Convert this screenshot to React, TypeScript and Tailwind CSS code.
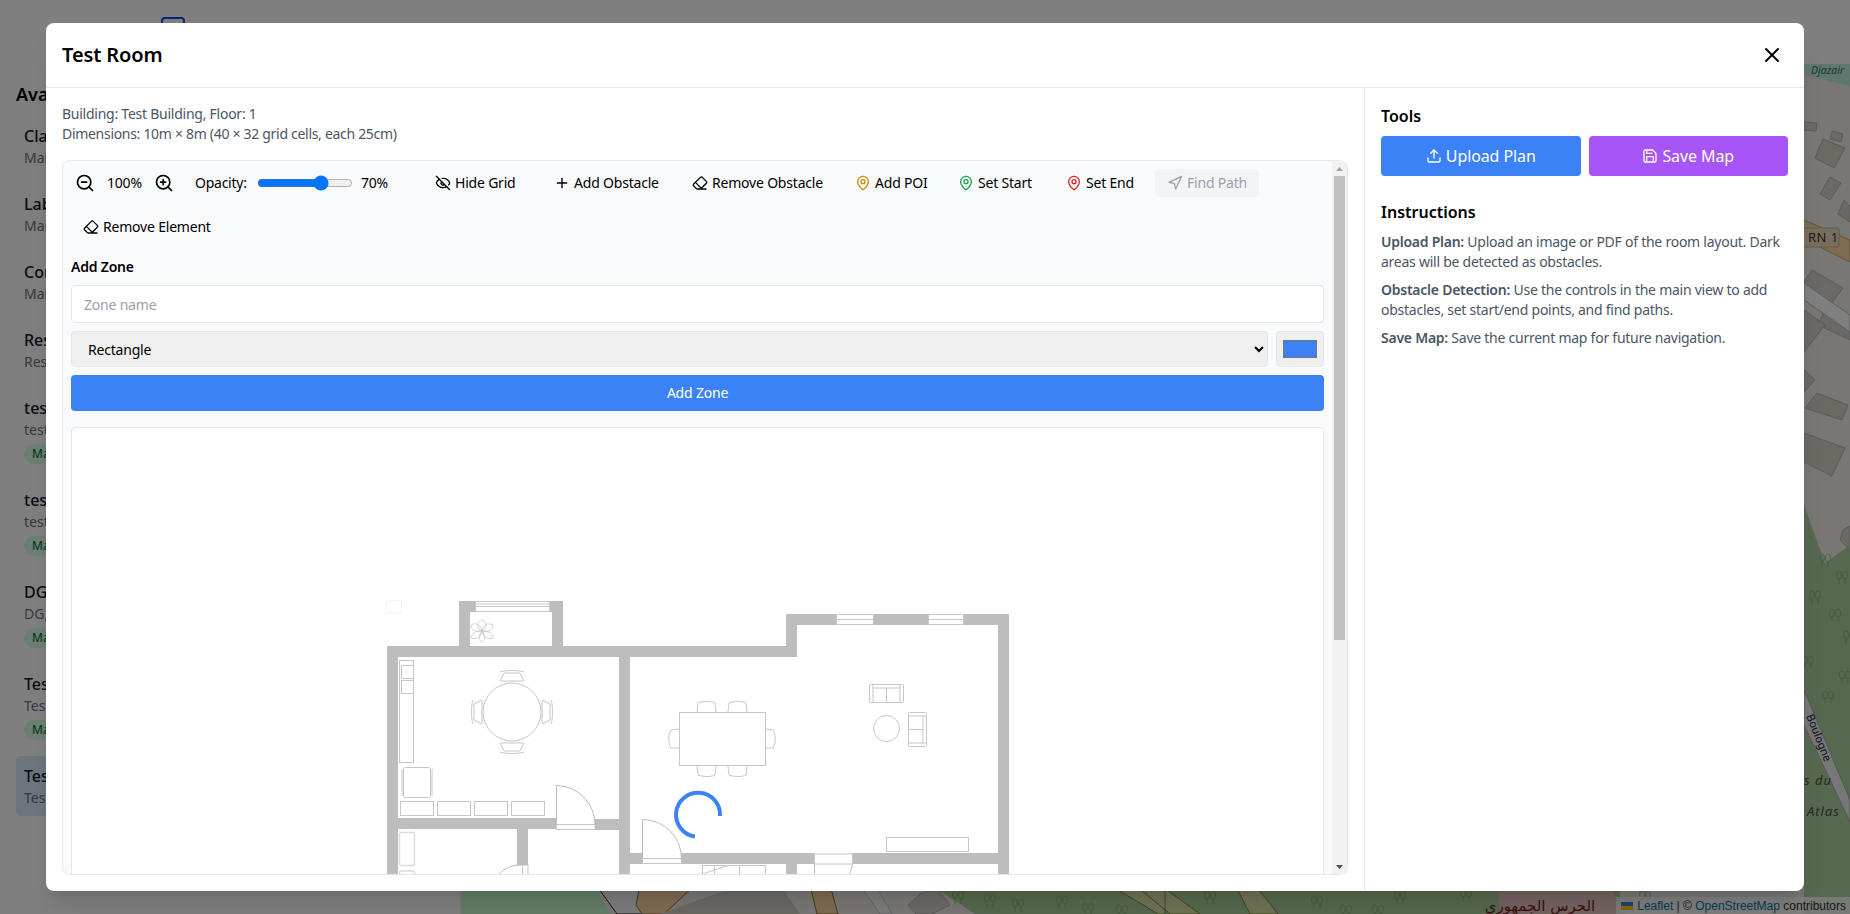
import { Eraser, EyeOff, MapPin, Navigation, Plus, Save, Upload, X, ZoomIn, ZoomOut } from "lucide-react"

const rooms = [
  { name: "Classroom A", sub: "Main Building, Floor 1" },
  { name: "Lab 1", sub: "Main Building, Floor 2" },
  { name: "Conference", sub: "Main Building, Floor 3" },
  { name: "Reserve", sub: "Reserve Building, Floor 1" },
  { name: "test", sub: "test, Floor 1", mapped: true },
  { name: "test 2", sub: "test, Floor 2", mapped: true },
  { name: "DG", sub: "DG, Floor 1", mapped: true },
  { name: "Test", sub: "Test Building, Floor 2", mapped: true },
  { name: "Test Room", sub: "Test Building, Floor 1", selected: true },
]

const trees = [
  [1825, 563], [1815, 600], [1842, 580], [1835, 618], [1849, 640], [1808, 665], [1845, 680], [1828, 700],
  [958, 900], [990, 903], [1018, 908], [1062, 905], [1088, 912], [1122, 914],
  [1210, 900], [1317, 905], [1346, 914], [1400, 900], [1378, 914], [1466, 898], [1645, 900],
]

function Tree({ x, y }: { x: number; y: number }) {
  return (
    <g fill="none" stroke="#8ab082" strokeWidth="0.8">
      <ellipse cx={x - 3} cy={y - 5} rx="2.5" ry="4" />
      <ellipse cx={x + 3} cy={y - 5} rx="2.5" ry="4" />
      <path d={`M${x - 3} ${y - 2}v6M${x + 3} ${y - 2}v6`} />
    </g>
  )
}

function OsmMap() {
  return (
    <svg viewBox="460 64 1390 850" className="block h-full w-full">
      <rect x="460" y="64" width="1390" height="850" fill="#f2efe9" />
      {/* top band */}
      <path d="M1790 64H1850V86L1790 72Z" fill="#bcf0de" />
      <text x="1811" y="74" fontSize="10.5" fontStyle="italic" fill="#4b6e66" fontFamily="'Noto Sans', sans-serif">Djazair</text>
      {/* buildings */}
      <g fill="#d9d0c9" stroke="#bfb3aa" strokeWidth="1">
        <path d="M1804 122L1817 123L1816 131L1804 130Z" />
        <path d="M1832 131L1843 134L1841 142L1830 139Z" />
        <path d="M1823 139L1845 148L1834 168L1815 158Z" />
        <path d="M1830 177L1841 183L1830 200L1820 194Z" />
        <path d="M1844 200L1850 206V222L1838 214Z" />
        <path d="M1812 270L1843 288L1825 312L1804 296V282Z" />
        <path d="M1827 305L1850 318V340L1818 325Z" />
        <path d="M1804 310L1825 325L1804 352Z" />
        <path d="M1817 393L1848 405L1842 420L1805 408Z" />
        <path d="M1804 433L1845 448L1832 476L1804 462Z" />
        <path d="M1804 370L1815 380L1804 392Z" />
        <path d="M1843 530L1850 526V550L1840 540Z" />
        <path d="M908 905L926 889H938L950 905L932 914H916Z" />
      </g>
      {/* RN 1 road */}
      <path d="M1790 214L1850 240V262L1790 232Z" fill="#fcd6a4" stroke="#c9a267" strokeWidth="1" />
      <rect x="1800" y="228" width="39" height="19" rx="2" fill="#f0dcc0" stroke="#c9b495" strokeWidth="1" />
      <text x="1808" y="242" fontSize="13" letterSpacing="0.5" fill="#333" fontFamily="'Noto Sans', sans-serif">RN 1</text>
      <path d="M1804 283L1850 315V332L1804 300Z" fill="#fff" stroke="#bbb" strokeWidth="1" />
      {/* forest on the right */}
      <path d="M1804 505L1825 563L1850 545V914H1804Z" fill="#add19e" />
      <path d="M1804 690L1850 800V822L1804 725Z" fill="#eeeeee" stroke="#aaa" strokeWidth="1" />
      <text x="1806" y="716" fontSize="11" fill="#222" transform="rotate(68 1806 716)" fontFamily="'Noto Sans', sans-serif">Boulogne</text>
      <text x="1804" y="785" fontSize="13" fontStyle="italic" letterSpacing="1" fill="#46563f" fontFamily="'Noto Sans', sans-serif">s du</text>
      <text x="1807" y="816" fontSize="13" fontStyle="italic" letterSpacing="1" fill="#46563f" fontFamily="'Noto Sans', sans-serif">Atlas</text>
      {/* bottom strip */}
      <path d="M462 885H596L610 914H462Z" fill="#c8facc" />
      <path d="M596 885L640 885L660 914H617Z" fill="#f8f8f8" stroke="#222" strokeWidth="1" />
      <path d="M640 885L695 885L664 914H642L636 905Z" fill="#fcd6a4" stroke="#8f6f2e" strokeWidth="1" />
      <path d="M660 914L740 885H780L800 914Z" fill="#d9d0c9" />
      <path d="M810 885H830L838 914H817Z" fill="#fcd6a4" stroke="#8f6f2e" strokeWidth="1" />
      <path d="M860 885H875L892 914H880Z" fill="#f8f8f8" stroke="#ccc" strokeWidth="1" />
      <path d="M931 885L975 914H1620V885Z" fill="#add19e" />
      <path d="M1110 885H1165V914H1158ZM1160 885L1200 914H1170L1135 885Z" fill="#dfe5a8" stroke="#7e8a3a" strokeWidth="1" />
      <path d="M1235 885H1255L1278 914H1250Z" fill="#dfe5a8" stroke="#7e8a3a" strokeWidth="1" />
      <path d="M1498 891L1612 891L1625 914H1500Z" fill="#e6c6c2" />
      {trees.map(([x, y]) => (
        <Tree key={`${x}-${y}`} x={x} y={y} />
      ))}
      <text x="1540" y="911" textAnchor="middle" fontSize="15" fill="#7a1c1c" fontFamily="'DejaVu Sans', sans-serif">الحرس الجمهوري</text>
    </svg>
  )
}

function Background() {
  return (
    <div className="flex h-[914px] w-[1850px] flex-col overflow-hidden bg-white">
      <div className="flex h-16 shrink-0 items-start pl-[161px] pt-[17px]">
        <div className="h-6 w-6 rounded border-2 border-blue-700" />
      </div>
      <div className="relative flex min-h-0 flex-1">
        <div className="w-[460px] shrink-0 p-4">
          <h2 className="mb-2 text-lg font-semibold leading-7 text-black">Available Rooms</h2>
          {rooms.map((room) => (
            <div key={room.name} className={`mb-2 rounded p-2 ${room.selected ? "bg-blue-100" : ""}`}>
              <div className="font-medium leading-6 text-gray-900">{room.name}</div>
              <div className="text-sm leading-5 text-gray-500">{room.sub}</div>
              {room.mapped && (
                <span className="mt-1 block h-5 w-20 rounded-full bg-green-100 px-2 text-xs leading-5 text-green-800">Mapped</span>
              )}
            </div>
          ))}
        </div>
        <div className="min-w-0 flex-1">
          <OsmMap />
        </div>
        <div className="absolute bottom-0 right-0 flex h-[17px] items-center gap-1 bg-white/80 pl-[5px] pr-1 font-['Liberation_Sans',sans-serif] text-xs leading-none text-[#333]">
          <svg width="12" height="8" viewBox="0 0 12 8">
            <rect width="12" height="4" fill="#4c7be1" />
            <rect y="4" width="12" height="4" fill="#ffd500" />
          </svg>
          <span><span className="text-[#0078a8]">Leaflet</span> | © <span className="text-[#0078a8]">OpenStreetMap</span> contributors</span>
        </div>
      </div>
    </div>
  )
}

function ToolButton({ icon, label, width, disabled }: { icon: React.ReactNode; label: string; width: string; disabled?: boolean }) {
  return (
    <button className={`flex h-7 items-center gap-1 whitespace-nowrap rounded px-3 text-sm tracking-[-0.2px] ${width} ${disabled ? "bg-gray-100 text-gray-400" : "text-black"}`}>
      {icon}
      {label}
    </button>
  )
}

function FloorPlan() {
  const line = "#c6c6c6"
  return (
    <svg viewBox="72 428 1252 760" className="block h-[760px] w-[1252px]">
      {/* walls */}
      <g fill="#bdbdbd">
        <rect x="459" y="601" width="11" height="56" />
        <rect x="552" y="601" width="11" height="56" />
        <rect x="470" y="601" width="5" height="11" />
        <rect x="549" y="601" width="3" height="11" />
        <rect x="387" y="646" width="410" height="11" />
        <rect x="786" y="614" width="223" height="11" />
        <rect x="786" y="614" width="11" height="43" />
        <rect x="998" y="614" width="11" height="600" />
        <rect x="387" y="646" width="11" height="560" />
        <rect x="619" y="646" width="11" height="560" />
        <rect x="398" y="818" width="158" height="11" />
        <rect x="595" y="819" width="24" height="11" />
        <rect x="517" y="829" width="11" height="36" />
        <rect x="630" y="853" width="13" height="11" />
        <rect x="681" y="853" width="133" height="11" />
        <rect x="852" y="853" width="146" height="11" />
        <rect x="786" y="864" width="11" height="340" />
      </g>
      {/* windows and doors */}
      <g fill="#fff" stroke={line} strokeWidth="1">
        <rect x="475.5" y="601.5" width="74" height="10" />
        <path d="M475.5 606.5h74M475.5 604h74" fill="none" />
        <rect x="836.5" y="614.5" width="37" height="10" />
        <path d="M836.5 619.5h37" fill="none" />
        <rect x="928.5" y="614.5" width="35" height="10" />
        <path d="M928.5 619.5h35" fill="none" />
        <rect x="556.5" y="824.5" width="38.5" height="5" />
        <path d="M556.5 824.5V785.5A39 39 0 0 1 595 824.5" fill="none" stroke="#bbb" />
        <rect x="642.5" y="858.5" width="39" height="5" />
        <path d="M642.5 858.5V819.5A39 39 0 0 1 681.5 858.5" fill="none" stroke="#bbb" />
        <rect x="814.5" y="854" width="38" height="10" />
        <path d="M814.5 864V900M852.5 864C852 868 851 871 849 876" fill="none" stroke="#bbb" />
        <rect x="522.5" y="865" width="5.5" height="30" />
        <path d="M498 875A30 30 0 0 1 522 865" fill="none" stroke="#bbb" />
      </g>
      {/* stairs */}
      <path d="M702.5 865.5H765.5M702.5 865V900M714.5 865V900M739.5 865V900M765.5 865V900M702.5 874L728 865.5" fill="none" stroke={line} />
      {/* furniture */}
      <g fill="none" stroke={line} strokeWidth="1">
        <rect x="399.5" y="660.5" width="14" height="102" />
        <rect x="401.5" y="665.5" width="12" height="13" />
        <rect x="401.5" y="680.5" width="12" height="13" />
        <rect x="403.5" y="767.5" width="27" height="30" rx="2" />
        <path d="M402 769V796M432 769V796" />
        <rect x="400.5" y="801.5" width="33" height="14" />
        <rect x="437.5" y="801.5" width="33" height="14" />
        <rect x="474.5" y="801.5" width="33" height="14" />
        <rect x="511.5" y="801.5" width="33" height="14" />
        <rect x="399.5" y="832.5" width="15" height="33" rx="2" stroke="#dcdcdc" strokeWidth="1.5" />
        <rect x="399.5" y="871" width="15" height="30" rx="2" stroke="#dcdcdc" strokeWidth="1.5" />
        <rect x="386.5" y="600.5" width="15" height="12" stroke="#f4f4f4" />
        {/* round table */}
        <circle cx="512" cy="712" r="29" />
        <path d="M500 681H524L520 673H504ZM500 672C506 670 518 670 524 672" />
        <path d="M500 743H524L520 751H504ZM500 752C506 754 518 754 524 752" />
        <path d="M482 700V724L474 720V704ZM473 700C471 706 471 718 473 724" />
        <path d="M542 700V724L550 720V704ZM551 700C553 706 553 718 551 724" />
        {/* plant */}
        <path d="M482 631C476 628 477 621 482 620C487 621 488 628 482 631ZM482 631C476 633 471 630 471 625C476 622 481 625 482 631ZM482 631C487 633 493 630 493 625C488 622 483 625 482 631ZM482 631C476 630 471 634 471 638C476 640 481 637 482 631ZM482 631C488 630 493 634 493 638C488 640 483 637 482 631ZM482 631C478 636 479 641 482 642C485 641 486 636 482 631Z" strokeWidth="0.8" />
        {/* dining table */}
        <rect x="679.5" y="712.5" width="86" height="53" />
        <path d="M697 712L698 703C703 701 711 701 715 703L716 712M728 712L729 703C734 701 742 701 746 703L747 712" />
        <path d="M697 766L698 775C703 777 711 777 715 775L716 766M728 766L729 775C734 777 742 777 746 775L747 766" />
        <path d="M679 729L671 730C668 735 668 743 671 748L679 748M765 729L773 730C776 735 776 743 773 748L765 748" />
        {/* living room */}
        <rect x="869.5" y="684.5" width="34" height="18" rx="1" />
        <path d="M873 684.5V702.5M900 684.5V702.5M873 688H900M886.5 688V702.5" />
        <circle cx="886.5" cy="728.5" r="13" />
        <rect x="908.5" y="712.5" width="18" height="34" rx="1" />
        <path d="M908.5 716H926.5M908.5 743H926.5M923 716V743M908.5 729.5H923" />
        <rect x="886.5" y="837.5" width="82" height="14" />
      </g>
      {/* loading spinner */}
      <path d="M720 816A22 22 0 1 0 695 836.5" fill="none" stroke="#3b82f6" strokeWidth="4" />
    </svg>
  )
}

function Scrollbar() {
  return (
    <div className="flex w-[15px] shrink-0 flex-col bg-[#f1f1f1]">
      <div className="flex h-[15px] shrink-0 items-center justify-center">
        <svg width="7" height="4" viewBox="0 0 7 4"><path d="M3.5 0L7 4H0Z" fill="#a3a3a3" /></svg>
      </div>
      <div className="mx-[2px] h-[464px] shrink-0 bg-[#c1c1c1]" />
      <div className="mt-auto flex h-[15px] shrink-0 items-center justify-center">
        <svg width="7" height="4" viewBox="0 0 7 4"><path d="M3.5 4L7 0H0Z" fill="#505050" /></svg>
      </div>
    </div>
  )
}

export default function App() {
  return (
    <div className="relative h-[914px] w-[1850px] overflow-hidden font-['Noto_Sans',sans-serif]">
      <Background />
      <div className="absolute inset-0 flex items-center justify-center bg-black/50">
        <div className="flex h-[868px] w-[1758px] flex-col overflow-hidden rounded-lg bg-white shadow-xl">
          <div className="flex h-[65px] shrink-0 items-center justify-between border-b border-gray-200 px-4">
            <h2 className="text-xl font-semibold tracking-[-0.1px] text-black">Test Room</h2>
            <button className="mr-1 text-black">
              <X className="h-6 w-6" />
            </button>
          </div>
          <div className="flex min-h-0 flex-1">
            <div className="flex min-w-0 flex-1 flex-col p-4">
              <p className="text-sm leading-5 tracking-[-0.25px] text-gray-600">Building: Test Building, Floor: 1</p>
              <p className="mb-4 text-sm leading-5 tracking-[-0.3px] text-gray-600">Dimensions: 10m × 8m (40 × 32 grid cells, each 25cm)</p>
              <div className="flex min-h-0 flex-1 overflow-hidden rounded-lg border border-gray-200 bg-gray-50">
                <div className="min-w-0 flex-1 overflow-hidden p-2">
                  <div className="flex flex-wrap items-center gap-x-2 gap-y-4">
                    <div className="flex h-7 w-[103px] items-center gap-3 pl-1 text-sm tracking-[-0.2px] text-black">
                      <ZoomOut className="h-5 w-5" />
                      <span className="w-[35px]">100%</span>
                      <ZoomIn className="h-5 w-5" />
                    </div>
                    <div className="ml-[13px] flex h-7 w-[220px] items-center gap-2 text-sm tracking-[-0.25px] text-black">
                      <span className="w-[54px]">Opacity:</span>
                      <input type="range" defaultValue={70} className="w-24" />
                      <span>70%</span>
                    </div>
                    <ToolButton width="w-[111px]" icon={<EyeOff className="h-4 w-4 shrink-0" />} label="Hide Grid" />
                    <ToolButton width="w-[130px]" icon={<Plus className="h-4 w-4 shrink-0" />} label="Add Obstacle" />
                    <ToolButton width="w-[155px]" icon={<Eraser className="h-4 w-4 shrink-0" />} label="Remove Obstacle" />
                    <ToolButton width="w-[95px]" icon={<MapPin className="h-4 w-4 shrink-0 text-[#ca8a04]" />} label="Add POI" />
                    <ToolButton width="w-[100px]" icon={<MapPin className="h-4 w-4 shrink-0 text-[#16a34a]" />} label="Set Start" />
                    <ToolButton width="w-[93px]" icon={<MapPin className="h-4 w-4 shrink-0 text-[#dc2626]" />} label="Set End" />
                    <ToolButton width="w-[104px]" icon={<Navigation className="h-4 w-4 shrink-0" />} label="Find Path" disabled />
                    <ToolButton width="w-[150px]" icon={<Eraser className="h-4 w-4 shrink-0" />} label="Remove Element" />
                  </div>
                  <div className="mt-4 text-sm font-semibold leading-5 tracking-[-0.2px] text-black">Add Zone</div>
                  <input
                    placeholder="Zone name"
                    className="mt-2 block h-[38px] w-full rounded border border-gray-200 bg-white px-3 text-sm tracking-[-0.2px] placeholder:text-gray-400"
                  />
                  <div className="mt-2 flex gap-2">
                    <select className="h-9 min-w-0 flex-1 rounded border border-gray-200 bg-[#efefef] px-3 text-sm tracking-[-0.2px] text-black">
                      <option>Rectangle</option>
                    </select>
                    <input type="color" defaultValue="#3b82f6" className="h-9 w-12 rounded border border-gray-200 bg-[#efefef] p-1" />
                  </div>
                  <button className="mt-2 h-9 w-full rounded bg-[#3b82f6] text-sm tracking-[-0.2px] text-white">Add Zone</button>
                  <div className="mt-4 overflow-hidden rounded border border-gray-200 bg-white">
                    <FloorPlan />
                  </div>
                </div>
                <Scrollbar />
              </div>
            </div>
            <div className="w-[440px] shrink-0 border-l border-gray-200 p-4">
              <h3 className="mb-2 font-semibold leading-6 text-black">Tools</h3>
              <div className="grid grid-cols-2 gap-2">
                <button className="flex h-10 items-center justify-center gap-1 rounded bg-[#3b82f6] tracking-[-0.1px] text-white">
                  <Upload className="h-4 w-4" />
                  Upload Plan
                </button>
                <button className="flex h-10 items-center justify-center gap-1 rounded bg-[#a855f7] tracking-[-0.1px] text-white">
                  <Save className="h-4 w-4" />
                  Save Map
                </button>
              </div>
              <h3 className="mb-2 mt-6 font-semibold leading-6 text-black">Instructions</h3>
              <p className="mb-2 text-sm leading-5 tracking-[-0.25px] text-gray-600"><strong className="font-semibold">Upload Plan:</strong> Upload an image or PDF of the room layout. Dark areas will be detected as obstacles.</p>
              <p className="mb-2 text-sm leading-5 tracking-[-0.25px] text-gray-600"><strong className="font-semibold">Obstacle Detection:</strong> Use the controls in the main view to add obstacles, set start/end points, and find paths.</p>
              <p className="text-sm leading-5 tracking-[-0.25px] text-gray-600"><strong className="font-semibold">Save Map:</strong> Save the current map for future navigation.</p>
            </div>
          </div>
        </div>
      </div>
    </div>
  )
}
